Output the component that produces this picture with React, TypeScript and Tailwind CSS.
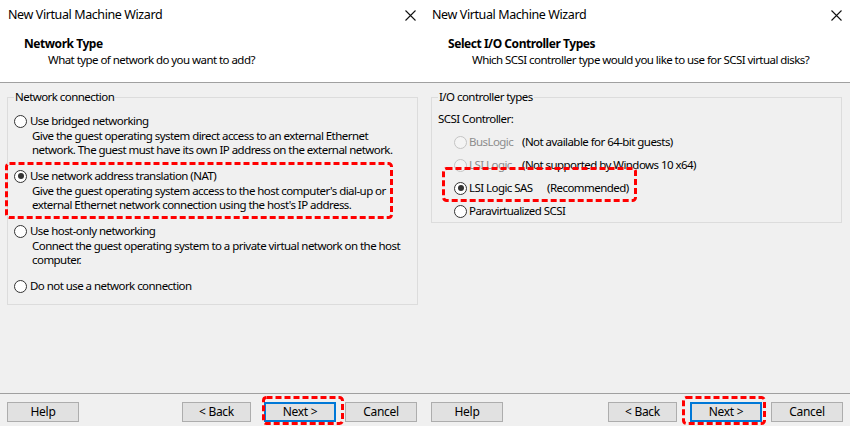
import React from 'react';

const FONT = "font-['Noto_Sans',sans-serif] text-[11.5px] tracking-[-0.55px]";

function CloseIcon() {
  return (
    <svg width="11" height="11" viewBox="0 0 11 11" className="block">
      <path d="M0.5 0.5 L10.5 10.5 M10.5 0.5 L0.5 10.5" stroke="#111" strokeWidth="1.1" fill="none" />
    </svg>
  );
}

function Radio({ checked = false, disabled = false }: { checked?: boolean; disabled?: boolean }) {
  return (
    <span className={`w-[13px] h-[13px] rounded-full border flex items-center justify-center flex-shrink-0 ${disabled ? 'border-[#c4c4c4] bg-[#f4f4f4]' : 'border-[#333] bg-white'}`}>
      {checked && <span className="w-[6px] h-[6px] rounded-full bg-[#333]" />}
    </span>
  );
}

// red dashed annotation drawn over the screenshot
function DashBox({ className, w, h }: { className: string; w: number; h: number }) {
  return (
    <svg width={w} height={h} className={`absolute pointer-events-none ${className}`}>
      <rect x="1.5" y="1.5" width={w - 3} height={h - 3} rx="3" fill="none" stroke="#ff0000" strokeWidth="3" strokeDasharray="6 3" />
    </svg>
  );
}

function Btn({ label, primary = false, className = '' }: { label: string; primary?: boolean; className?: string }) {
  return (
    <button className={`h-[20px] leading-none text-[12px] tracking-[-0.3px] text-black bg-[#e1e1e1] flex-shrink-0 ${primary ? 'border-2 border-[#0078d7]' : 'border border-[#adadad]'} ${className}`}>
      {label}
    </button>
  );
}

function GroupBox({ legend, className = '', children }: { legend: string; className?: string; children: React.ReactNode }) {
  return (
    <div className={`relative ml-[7px] w-[411px] border border-[#dcdcdc] ${className}`}>
      <span className="absolute -top-[9px] left-[6px] px-[1px] bg-[#f0f0f0] leading-[16px]">{legend}</span>
      {children}
    </div>
  );
}

function Dialog({ title, heading, sub, width, children, nextBox }: {
  title: string; heading: string; sub: string; width: string; children: React.ReactNode; nextBox: React.ReactNode;
}) {
  return (
    <div className={`relative flex flex-col h-[426px] flex-shrink-0 ${width}`}>
      <div className="h-[83px] bg-white border-b border-[#a0a0a0] flex-shrink-0">
        <div className="h-[30px] flex items-center justify-between pl-[8px] pr-[8px]">
          <span className="text-[12.5px] tracking-[-0.4px] text-black">{title}</span>
          <CloseIcon />
        </div>
        <div className="mt-[6px] pl-[24px] text-[12px] tracking-[-0.45px] font-bold leading-[16px] text-black">{heading}</div>
        <div className="pl-[48px] leading-[16px] text-black">{sub}</div>
      </div>
      <div className="flex-1 pt-[14px]">{children}</div>
      <div className="h-[33px] border-t border-[#a0a0a0] flex items-start pt-[8px] px-[7px]">
        <Btn label="Help" className="w-[72px]" />
        <div className="flex-1" />
        <Btn label="< Back" className="w-[69px]" />
        <Btn label="Next >" primary className="w-[72px] ml-[13px]" />
        <Btn label="Cancel" className="w-[72px] ml-[9px]" />
      </div>
      {nextBox}
    </div>
  );
}

function Option({ label, checked = false, desc }: { label: string; checked?: boolean; desc?: string[] }) {
  return (
    <div>
      <div className="h-[16px] flex items-center gap-[3px]">
        <Radio checked={checked} />
        <span>{label}</span>
      </div>
      {desc && (
        <div className="pl-[18px] leading-[14px]">
          {desc.map(d => <div key={d}>{d}</div>)}
        </div>
      )}
    </div>
  );
}

function ScsiRow({ label, note, width, checked = false, disabled = false }: { label: string; note: string; width: string; checked?: boolean; disabled?: boolean }) {
  return (
    <div className="h-[16px] flex items-center pl-[16px]">
      <div className={`flex items-center gap-[2px] flex-shrink-0 ${width}`}>
        <Radio checked={checked} disabled={disabled} />
        <span className={disabled ? 'text-[#8d8d8d]' : ''}>{label}</span>
      </div>
      {note && <span>{note}</span>}
    </div>
  );
}

export default function App() {
  return (
    <div className={`w-[850px] h-[426px] bg-[#f0f0f0] flex text-black overflow-hidden whitespace-nowrap ${FONT}`}>
      <Dialog
        title="New Virtual Machine Wizard"
        heading="Network Type"
        sub="What type of network do you want to add?"
        width="w-[424px]"
        nextBox={<DashBox className="left-[262px] top-[396px]" w={82} h={29} />}
      >
        <GroupBox legend="Network connection" className="pt-[15px] pb-[10px] pl-[6px]">
          <div className="flex flex-col gap-[11px]">
            <Option label="Use bridged networking" desc={[
              'Give the guest operating system direct access to an external Ethernet',
              'network. The guest must have its own IP address on the external network.',
            ]} />
            <Option label="Use network address translation (NAT)" checked desc={[
              "Give the guest operating system access to the host computer's dial-up or",
              "external Ethernet network connection using the host's IP address.",
            ]} />
            <Option label="Use host-only networking" desc={[
              'Connect the guest operating system to a private virtual network on the host',
              'computer.',
            ]} />
            <Option label="Do not use a network connection" />
          </div>
        </GroupBox>
        <DashBox className="left-[5px] top-[162px]" w={388} h={57} />
      </Dialog>

      <Dialog
        title="New Virtual Machine Wizard"
        heading="Select I/O Controller Types"
        sub="Which SCSI controller type would you like to use for SCSI virtual disks?"
        width="w-[426px]"
        nextBox={<DashBox className="left-[258px] top-[396px]" w={84} h={29} />}
      >
        <GroupBox legend="I/O controller types" className="pt-[13px] pb-[3px] pl-[6px]">
          <div className="flex flex-col gap-[7px]">
            <div className="h-[16px] flex items-center">SCSI Controller:</div>
            <ScsiRow label="BusLogic" note="(Not available for 64-bit guests)" width="w-[68px]" disabled />
            <ScsiRow label="LSI Logic" note="(Not supported by Windows 10 x64)" width="w-[68px]" disabled />
            <ScsiRow label="LSI Logic SAS" note="(Recommended)" width="w-[93px]" checked />
            <ScsiRow label="Paravirtualized SCSI" note="" width="w-[150px]" />
          </div>
        </GroupBox>
        <DashBox className="left-[18px] top-[167px]" w={195} h={35} />
      </Dialog>
    </div>
  );
}
